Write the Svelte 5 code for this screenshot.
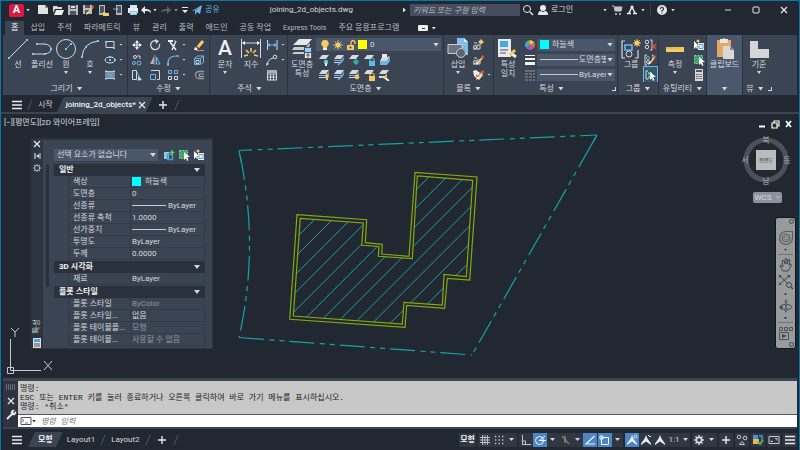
<script>
  const W = '#d6d9de';
  const B = '#6cb6ea';
  const Y = '#f6cb62';

  const line = (d, color = W, width = 1) =>
    `<path d="${d}" fill="none" stroke="${color}" stroke-width="${width}"/>`;
  const fill = (d, color = W) => `<path d="${d}" fill="${color}"/>`;
  const ring = (x, y, r, color = W, width = 1) =>
    `<circle cx="${x}" cy="${y}" r="${r}" fill="none" stroke="${color}" stroke-width="${width}"/>`;
  const disc = (x, y, r, color = W) => `<circle cx="${x}" cy="${y}" r="${r}" fill="${color}"/>`;
  const dots = (...pts) =>
    pts.map(([x, y]) => `<rect x="${x - 1}" y="${y - 1}" width="2" height="2" fill="#7cc8f5"/>`).join('');

  const sheet = fill('M4 1h7L8 5H1z');
  const stack = sheet + fill('M1 6h7l3-4v1L8 7H1z', B) + fill('M1 8h7l3-4v1L8 9H1z');
  const bulb = fill('M9 5a2.3 2.3 0 0 1 1 4v2H8V9a2.3 2.3 0 0 1 1-4z', Y);
  const sun = disc(9, 8, 2, Y) + line('M9 5v6M6 8h6M7 6l4 4M11 6l-4 4', Y, 0.6);
  const lock = (c) => fill('M6 7h6v5H6z', c) + line('M7 7V5q2-2 4 0v2', c);
  const pencil = line('M6 9l4-5', Y, 1.8) + fill('M4 11l1-3 2 1z', '#fff') + fill('M9 3l2-2 1 2-1 2z', '#e05a50');
  const cursor = fill('M6 3v8l2-2 1 3 1.5-1L9 8h3z', '#fff');
  const man = fill('M6 1l1.400 3.500L11 9.500V11L6 7.500 1 11V9.500L4.600 4.500z', '#e8eaee');

  const icons = {
    // title bar
    doc: fill('M1 1h7l3 3v6H1z', '#e3e3e3') + fill('M8 1l3 3H8z', '#8b919b'),
    open: fill('M1 2h4l1 1h4v2H3L1 9z') + fill('M4 6h8l-2 5H2z', '#eee'),
    save: fill('M1 1h10v10H1z', '#b9bcc1') + fill('M3 1h6v4H3zM3 7h6v4H3z', '#4d545f') + fill('M4 2h4v2H4z', '#ddd'),
    saveAs: fill('M1 1h9v9H1z', '#b9bcc1') + fill('M3 1h5v3H3zM3 6h4v4H3z', '#4d545f') + pencil,
    toWeb: fill('M2 1h6v10H2z', '#b4b8bf') + fill('M3 2h4v7H3z', '#4d545f') + fill('M6 8h2l1 1h3v3H6z', Y),
    fromWeb: fill('M4 1h6v10H4z', '#b4b8bf') + fill('M5 2h4v7H5z', '#4d545f') + line('M1 5h5M4 3l2 2-2 2', B),
    print: fill('M3 1h7v4H3z', '#cfeaff') + fill('M1 4h10v5H1z', '#ededed') + fill('M3 7h7v4H3z', '#8cc8f0') + line('M4 9h5', '#fff'),
    undo: fill('M1 6l4-4v3c4 0 6 1 6 4-2-2-3-2-6-2v3z', '#e8eaee'),
    redo: fill('M11 6L7 2v3C3 5 1 6 1 9c2-2 3-2 6-2v3z', '#59616e'),
    custom: fill('M3 3h6v1H3zM3 6h6L6 9z', '#e8eaee'),
    send: fill('M1 7L11 1 9 10 6 8 4 11V7l4-4-5 4z', B),
    search: ring(5, 5, 3.500, '#e8eaee') + line('M8 8l3 3', '#e8eaee', 1.400),
    user: disc(6, 4, 3, '#e8eaee') + fill('M1 11q0-4 3-4l2 1 2-1q3 0 3 4z', '#e8eaee'),
    cart: line('M1 2h2l1 5h6l1-4H4', '#ccc') + fill('M4 3h7l-1 4H4z', '#bfc3ca') + disc(5, 10, 1, '#ccc') + disc(9, 10, 1, '#ccc'),
    autodesk: line('M3 9L6 3l3 6M1 9.500h4M7 9.500h4', '#e8eaee', 1.500) + disc(6, 3, 1.500, '#e8eaee'),
    help: disc(6, 6, 5, '#e6e6e6') + line('M4.500 5q0-2 1.500-2t1.500 2q0 1-1.500 1.500v1M6 8.500v1', '#2a3039', 1.200),
    min: line('M3 6h6', '#d6d9de'),
    max: '<rect x="3" y="3" width="6" height="6" rx="1" fill="none" stroke="#e8eaee"/>',
    close: line('M3 3l6 6M9 3l-6 6', '#e8eaee', 1.200),
    panel: '<rect x="1" y="3" width="10" height="6" rx="1" fill="#eee"/>' + fill('M5 6h3v1H5z', '#333'),
    burger: line('M1 2.500h10M1 6h10M1 9.500h10', '#e8eaee', 1.500),
    plus: line('M6 2v8M2 6h8', '#e8eaee', 1.400),
    slash: line('M4 11L8 1', '#4d5564'),

    // draw
    line: line('M2 20L20 2') + dots([2, 20], [20, 2]),
    polyline: line('M2 16h12M6 6h8q6 1 6 5t-6 5') + dots([2, 16], [14, 16], [6, 6], [20, 11]),
    circle: ring(11, 11, 9.500) + line('M11 11l4-4', B) + dots([11, 11], [16, 6]),
    arc: line('M3 19Q4 5 19 3') + dots([3, 19], [7, 9], [19, 3]),
    rect: line('M2 2.500h8v6H2z') + dots([2, 3], [10, 9]),
    ellipse: '<ellipse cx="6" cy="6" rx="5" ry="3" fill="none" stroke="#d6d9de"/>' + dots([6, 6], [11, 6], [6, 3]),
    hatch: fill('M3 3h6v6H3z', '#6b9cc4') + line('M2 1v10M10 1v10M1 2.500h10M1 9.500h10', '#c0c5cc'),

    // modify
    move: line('M6 3v6M3 6h6', '#f2f2f2', 1.200) + fill('M6 1l2 3H4zM6 11l2-3H4zM1 6l3-2v4zM11 6L8 4v4z', '#f2f2f2'),
    rotate: line('M8 2A4.500 4.500 0 1 0 10.500 5', W, 1.300) + fill('M6 0l4 2-3 3z'),
    trim: line('M3 3l6 8M9 2L5 11', '#eee', 1.500) + fill('M1 1h5v2H1z', '#eee') + line('M8 1v4', B),
    erase: line('M5 8l5-6', Y, 3) + fill('M2 8l3 2-2 1H1z', '#fff') + fill('M4 7l2 2-1 1-2-2z', '#e05a50') + line('M3 11.500h8', '#b88'),
    copy: ring(4, 3, 1.500) + ring(8, 9, 2, B) + ring(3, 9, 1.500, B) + line('M6 2h3v3'),
    mirror: fill('M5 2v8H1z', '#aab0b9') + line('M7.500 3v7H11z', B) + line('M6 1v10', '#eee', 0.5),
    fillet: line('M1 11V9Q1 2 9 2', B, 1.200) + line('M9 2h3M1 9v3'),
    box: line('M1.500 4.500h6v6h-6zM2 4l2-2h7L8 4M10.500 2v6l-2 2', B) + line('M3 6.500h3v3H3z'),
    stretch: line('M1.500 1.500h4v9h-4z') + line('M6 3l4 8H6', B) + fill('M7 7l4 4H7z'),
    scale: line('M2 1.500h8.500v9H8') + line('M1.500 5.500h5v5h-5z', B),
    array: line('M1.500 1.500h3v3h-3zM7.500 1.500h3v3h-3z', B) + line('M1.500 7.500h3v3h-3zM7.500 7.500h3v3h-3z'),
    offset: line('M11 2.500H6a3.500 3.500 0 0 0 0 7h5', '#b58f8a', 1.300) + line('M11 5H7q-2 1 0 2.500h4', B, 1.200),

    // annotate
    text: '<text x="11" y="17" text-anchor="middle" font-size="21" font-weight="500" fill="#f0f1f3">A</text>',
    dimension: line('M1.500 1v19M20.500 1v19') + line('M3 5h16') + fill('M2 5l3-2v4zM20 5l-3-2v4z', '#fff') +
      line('M11 10v4M6 12l3 3M16 12l-3 3M4 18l4-1M18 18l-4-1', Y, 1.500),
    dimSmall: line('M1.500 1v10M11 1v10') + line('M2 6h8', B) + fill('M1 6l3-2v4zM11 6L8 4v4z', B),
    leader: line('M1 11Q2 5 7 4') + ring(9, 3, 1.800) + fill('M0 12l1-4 2 2z'),
    table: line('M1.500 2h9v9h-9zM1 5h10M1 8h10M4.500 5v6M7.500 5v6') + fill('M1 1h10v3H1z', '#a9afb8'),

    // layers
    layers: fill('M8 1h13l-5 6H2z', '#e6e6e6') + fill('M3 9h12l4-4v2l-3 5H1zM3 14h11l3-3v2l-1 3H1z', '#c9ccd1') +
      fill('M13 9h8v12h-8z', '#4b5260') + fill('M14 10h6v4h-6z', '#8ed0fa') + fill('M14 15h6v5h-6z', '#e6e6e6') + line('M15 17h4M17 15v5', '#444', 0.800),
    layerBulb: sheet + disc(8, 8, 2.200, '#5fd0d8') + fill('M7 9h2v3H7z', '#d8f4f4'),
    layerStack: stack + line('M5 11l5-5', B, 1.500),
    layerFreeze: sheet + disc(8, 8, 2.400, '#36aaa6') + line('M8 5v6M5 8h6', '#36aaa6'),
    layerLock: sheet + lock('#58c0e2'),
    layerMatch: fill('M2 7h7l3-4v4l-3 4H2z', B) + fill('M4 3h5l3-1-3 5H2z') + fill('M4 0h5v4H4z', '#e6e6e6'),
    layerOn: stack + bulb,
    layerPencil: stack + line('M5 11l5-5', B, 1.500),
    layerThaw: stack + sun,
    layerUnlock: sheet + lock(Y),
    layerCopy: sheet + fill('M1 7h6l2-2v2L7 9H1z') + line('M6 8l5 4', '#eee', 2) + fill('M5 9l3-3 1 2-2 2z', Y),
    bulb: fill('M6 1a3.500 3.500 0 0 1 2 6.500V9H4V7.500A3.500 3.500 0 0 1 6 1z', Y) + fill('M4 9h4v2H4z', '#eee'),
    sun: disc(6, 6, 2.600, Y) + line('M6 1v10M1 6h10M2.500 2.500l7 7M9.500 2.500l-7 7', Y, 0.800),
    unlock: fill('M2 6h7v5H2z', Y) + line('M6 6V3q2-3 4 0v2', Y, 1.300) + disc(5.500, 8.500, 1, '#333'),

    // block
    insert: fill('M10 0h7l4 4v13H10z', '#7fc0ea') + fill('M17 0l4 4h-4z', '#d5ecfb') + fill('M1 6h14v10H1z', '#6b7380') +
      line('M1 6.500h14v9H1z', '#c9ccd1') + disc(14, 15, 5, '#5d6570') + ring(14, 15, 4.500, '#c9ccd1'),
    blockNew: line('M2 4h3M1 10h7V6H5v4') + ring(3, 8, 1.500) + disc(9, 3, 2, Y) + line('M9 0v6M6 3h6', Y, 0.800),
    blockEdit: line('M2 4h3M1 10h7V6H5v4') + ring(3, 8, 1.500) + pencil,
    attr: fill('M1 2l3-1 7 5-4 5-5-4z', '#eee') + line('M4 6l2 2 4-6', '#c8443c', 1.300) + pencil,

    // properties
    match: fill('M1 1h13v18H1z', '#e9e9e9') + fill('M3 3h8v6H3z', '#4aa6e0') + line('M3 12h8M3 15h6', '#555', 1.200) +
      line('M11 13l8 6', '#eee', 3) + line('M13 17l5-5', Y, 3),
    wheel: '<path d="M6 6V1a5 5 0 0 1 4.300 2.500z" fill="#f3c844"/>' + fill('M6 6l4.300-2.500a5 5 0 0 1 0 5z', '#e5763c') + fill('M6 6l4.300 2.500A5 5 0 0 1 6 11z', '#d34c9b') +
      fill('M6 6v5a5 5 0 0 1-4.300-2.500z', '#7a62d8') + fill('M6 6L1.700 8.500a5 5 0 0 1 0-5z', '#42a8de') + fill('M6 6L1.700 3.500A5 5 0 0 1 6 1z', '#57bd63'),
    weights: fill('M1 1h10v1H1zM1 4h10v2H1zM1 8h10v3H1z', '#f2f2f2'),
    types: line('M1 2h10', '#8f96a1') + '<path d="M1 5h10M1 8h10M1 11h10" stroke="#8f96a1" stroke-dasharray="3 1"/>',

    // groups and utilities
    group: line('M5 3H2v17h3M15 20h3v-8M18 12v8', W, 1.200) + line('M5 7h7v5H5z', B, 1.600) + ring(9, 16, 3) +
      disc(17, 5, 2.600, Y) + line('M17 1v8M13 5h8M14 2l6 6M20 2l-6 6', Y, 0.800),
    ungroup: ring(3, 3, 1.800) + ring(3, 8, 1.800) + line('M6 1h2v10H6') + line('M8 5l4 5M12 5l-4 5', '#e04848', 1.300),
    groupEdit: line('M3 1H1v10h2M8 1h1v4') + ring(4, 4, 1.500, B) + ring(4, 8, 1.500) + pencil,
    groupSel: line('M4 2H2v8h2') + fill('M4 3h4v3H4zM4 7h3v3H4z', '#4cbf7f') + cursor,
    measure: fill('M2 9h18v5H2z', Y) + line('M4 9v2M7 9v2M10 9v2M13 9v2M16 9v2', '#b08c38', 0.800),
    quickSel: fill('M5 4h6v7H5z', '#e8eef4') + line('M6 5.500h4v4H6z', '#5aa0d0') + fill('M1 2v8l2-2 1 2 1-1-1-2h2z', '#fff') + disc(5, 2, 1.500, Y),
    selAll: fill('M2 2h7v7H2z', '#39a868') + '<path d="M1.500 1.500h8v8h-8z" fill="none" stroke="#8ad7a6" stroke-dasharray="2 1"/>' + cursor,
    calc: fill('M2 0h8v12H2z', '#d9d9d9') + fill('M3 1h6v2H3z', '#555') + line('M3 5.500h6M3 7.500h6M3 9.500h6', '#666') + line('M5 4v7M7 4v7', '#d9d9d9', 0.600),
    clip: fill('M3 2h14v17H3z', '#e3a866') + fill('M6 1h3q1-2 2 0h3v4H6z', '#e6e6e6') + fill('M9 8h7l4 4v9H9z', '#d8d8d8') + fill('M16 8l4 4h-4z', '#8c8c8c'),
    base: fill('M2 3h8v8h11v9H2z', '#d5d6d8'),

    // palette
    pickAdd: fill('M1 3h5v7H1z', '#8ecbf2') + line('M4.500 5.500h5v5h-5z', '#4a9bd0', 1.500) + line('M9 1v5M6.500 3.500h5', '#57d36a', 1.400),
    pin: line('M4 3v6', W, 1.200) + line('M9 3v6', W) + fill('M5 6l3-2v4z'),
    gear: ring(6, 6, 2.600, W, 1.600) + line('M6 1v2M6 9v2M1 6h2M9 6h2M2.500 2.500l1.400 1.400M8.100 8.100l1.400 1.400M9.500 2.500L8.100 3.900M3.900 8.100L2.500 9.500', W, 1.500),
    cog: ring(6, 6, 2.500, '#b9bdc5') + line('M6 2v1.500M6 8.500V10M2 6h1.500M8.500 6H10M3 3l1 1M8 8l1 1M9 3L8 4M4 8L3 9', '#b9bdc5'),
    sheetProps: fill('M2 1h8v10H2z', '#ddd') + fill('M3 2h6v3H3z', '#4aa6e0') + line('M3 7h6M3 9h6', '#555'),

    // command line and status bar
    wrench: line('M2 10l5-5', '#e8eaee', 1.800) + fill('M6 5a3 3 0 0 1 4-4L8 3l1 1 2-2a3 3 0 0 1-4 4z', '#e8eaee'),
    grip: '<path d="M1 4h10M1 6h10M1 8h10" stroke="#9da3ad" stroke-dasharray="1 1"/>',
    prompt: line('M1 2.500h10v7H1z', '#555') + line('M2 4l2 1.500L2 7M5 8h3', '#555', 0.800),
    grid: line('M3.500 1v10M6 1v10M8.500 1v10M1 3.500h10M1 6h10M1 8.500h10', '#c3c7ce', 0.900),
    snap: '<path d="M2 2.500h9M2 6h9M2 9.500h9" stroke="#c3c7ce" stroke-width="1.300" stroke-dasharray="1.300 2.200"/>',
    ortho: line('M2.500 1v9.500H11M2.500 7h3v3', '#c3c7ce'),
    polar: ring(5.500, 6.500, 4, '#eef4fa') + line('M5 7l6-5M5.500 6.500H12', '#eef4fa'),
    iso: line('M3 2l7 8', '#b0606c', 1.200) + line('M6 2v7', '#58b868', 1.200),
    track: line('M10.500 2L2 10h9', '#eef4fa', 1.200),
    osnap: line('M2.500 3.500h7v7h-7z', '#eef4fa') + line('M1 2h3v3H1z', '#eef4fa'),
    man: man,
    manScale: man + ring(9.500, 2.500, 1.500, '#e8eaee', 0.900),
    manAuto: man + line('M8 1l2 2 1-1', '#e8eaee'),
    shapes: ring(3, 3, 1.800, '#c3c7ce') + ring(9, 4, 1.800, '#c3c7ce') + line('M6 7.500l2.500 3h-5z', '#c3c7ce'),
    trusted: fill('M1 1h5v4H1z', '#4a8edb') + fill('M1 5h6v5H1z', '#e8b84c') + line('M7 2h3v4', '#4a8edb', 1.500) + line('M6 8l2 2 3-4', '#4fc05c', 1.800),
    screen: line('M1 2.500h10v7H1z', '#c3c7ce') + line('M7 4.500h2v2M5 7.500H3v-1', '#c3c7ce'),

    // navigation bar
    nav: '<path d="M1.500 8a6.500 6.500 0 0 1 6.500-6.500h6.500V8a6.500 6.500 0 0 1-13 0z" fill="none" stroke="#555d68" stroke-width="1.200"/>' +
      ring(8, 8, 4, '#555d68') + '<rect x="6" y="6" width="4" height="4" rx="1.500" fill="none" stroke="#555d68" stroke-width="0.700"/>',
    hand: line('M5 14L2 9q0-2 2 0l1 1-1-6q1-2 2 0l1 3V2q1-1 2 0v5l1-4q1-1 2 0l-1 5 1-1q2 0 1 2l-3 5z', '#3e4650'),
    zoomNav: line('M2 2l8 8M11 2L3 9', '#3e4650') + fill('M1 1h3L1 4zM12 1H9l3 3zM1 11V8l3 3z', '#3e4650') + ring(11, 11, 2.500, '#3e4650') + line('M13 13l2 2', '#3e4650', 1.200),
    orbit: '<ellipse cx="8" cy="9" rx="6" ry="2.500" fill="none" stroke="#3e4650"/>' + fill('M8 1l2 3H9v8h1l-2 3-2-3h1V4H6z', '#59697a') + fill('M1 9l3 3 1-4z', '#3e4650'),
    motion: line('M1.500 2.500h3v3h-3zM6.500 2.500h3v3h-3zM11.500 2.500h3v3h-3zM1.500 7.500h9v7h-9z', '#4b535e') + fill('M4 9l5 2-5 2z', '#3e4650')
  };

  const quick = [
    ['doc', '새로 만들기'], ['open', '열기'], ['save', '저장'], ['saveAs', '다른 이름으로 저장'],
    ['toWeb', '웹에서 열기'], ['fromWeb', '웹에 저장'], ['print', '플롯']
  ];

  const menus = ['홈', '삽입', '주석', '파라메트릭', '뷰', '관리', '출력', '애드인', '공동 작업', 'Express Tools', '주요 응용프로그램'];

  const drawTools = [['line', '선'], ['polyline', '폴리선'], ['circle', '원', true], ['arc', '호', true]];
  const modifyTools = [
    ['move'], ['rotate'], ['trim', true], ['erase'],
    ['copy'], ['mirror'], ['fillet', true], ['box'],
    ['stretch'], ['scale'], ['array', true], ['offset']
  ];
  const layerTools = [
    'layerBulb', 'layerStack', 'layerFreeze', 'layerLock', 'layerMatch',
    'layerOn', 'layerPencil', 'layerThaw', 'layerUnlock', 'layerCopy'
  ];

  const sections = [
    {
      name: '일반',
      rows: [
        { label: '색상', value: '하늘색', swatch: true },
        { label: '도면층', value: '0' },
        { label: '선종류', value: 'ByLayer', rule: true },
        { label: '선종류 축척', value: '1.0000' },
        { label: '선가중치', value: 'ByLayer', rule: true },
        { label: '투명도', value: 'ByLayer' },
        { label: '두께', value: '0.0000' }
      ]
    },
    { name: '3D 시각화', rows: [{ label: '재료', value: 'ByLayer' }] },
    {
      name: '플롯 스타일',
      rows: [
        { label: '플롯 스타일', value: 'ByColor', dim: true },
        { label: '플롯 스타일...', value: '없음' },
        { label: '플롯 테이블플...', value: '모형', dim: true },
        { label: '플롯 테이블...', value: '사용할 수 없음', dim: true }
      ]
    }
  ];

  // 45 degree hatch, one value of x + y per line
  const hatch = Array.from({ length: 12 }, (_, k) => 534 + k * 17.95);

  let menu = $state('홈');
  let command = $state('');
  let query = $state('');
</script>

{#snippet icon(name, size = 12)}
  <svg class="icon" width={size} height={size} viewBox="0 0 {size} {size}" aria-hidden="true">{@html icons[name]}</svg>
{/snippet}

{#snippet big(name, label, arrow = false)}
  <button class="big">
    {@render icon(name, 22)}
    <span class="caption">{label}</span>
    {#if arrow}<i class="arrow"></i>{/if}
  </button>
{/snippet}

{#snippet tool(name, arrow = false)}
  <button class="tool" aria-label={name}>{@render icon(name)}{#if arrow}<i class="arrow"></i>{/if}</button>
{/snippet}

{#snippet title(text, launcher = false)}
  <footer class="panel-title">
    <span>{text}</span><i class="arrow wide"></i>
    {#if launcher}<i class="launcher"></i>{/if}
  </footer>
{/snippet}

<div class="app">
  <header class="titlebar">
    <button class="logo" aria-label="응용프로그램 메뉴">A</button>
    <i class="arrow"></i>
    <div class="quick">
      {#each quick as [name, label]}
        <button class="slot" aria-label={label}>{@render icon(name)}</button>
      {/each}
      <button class="slot narrow" aria-label="명령 취소">{@render icon('undo')}</button><i class="arrow"></i>
      <button class="slot" aria-label="명령 복구">{@render icon('redo')}</button><i class="arrow dim"></i>
      <button class="slot narrow" aria-label="사용자화">{@render icon('custom')}</button>
    </div>
    <button class="share">{@render icon('send')}공유</button>
    <h1>joining_2d_objects.dwg</h1>
    <i class="play"></i>
    <input class="search" type="search" placeholder="키워드 또는 구절 입력" aria-label="검색" bind:value={query} />
    <button class="slot wide" aria-label="찾기">{@render icon('search')}</button>
    <button class="login">{@render icon('user')}로그인</button>
    <i class="arrow"></i>
    <button class="slot" aria-label="장바구니">{@render icon('cart')}</button>
    <button class="slot" aria-label="Autodesk">{@render icon('autodesk')}</button>
    <i class="arrow"></i>
    <span class="vr"></span>
    <button class="slot" aria-label="도움말">{@render icon('help')}</button>
    <i class="arrow"></i>
    <div class="window-buttons">
      <button aria-label="최소화">{@render icon('min')}</button>
      <button aria-label="최대화">{@render icon('max')}</button>
      <button aria-label="닫기">{@render icon('close')}</button>
    </div>
  </header>

  <nav class="menubar">
    {#each menus as name}
      <button class:active={menu === name} class:latin={/^[A-Z]/.test(name)} onclick={() => (menu = name)}>{name}</button>
    {/each}
    <button class="view-toggle" aria-label="리본 보기">{@render icon('panel')}<i class="arrow"></i></button>
  </nav>

  <div class="ribbon">
    <section class="panel draw">
      <div class="tools">
        {#each drawTools as [name, label, arrow]}
          {@render big(name, label, arrow)}
        {/each}
        <div class="column">
          {@render tool('rect', true)}
          {@render tool('ellipse', true)}
          {@render tool('hatch', true)}
        </div>
      </div>
      {@render title('그리기')}
    </section>

    <section class="panel modify">
      <div class="tools modify-grid">
        {#each modifyTools as [name, arrow]}
          {@render tool(name, arrow)}
        {/each}
      </div>
      {@render title('수정')}
    </section>

    <section class="panel annotate">
      <div class="tools">
        {@render big('text', '문자', true)}
        {@render big('dimension', '지수')}
        <div class="column">
          {@render tool('dimSmall', true)}
          {@render tool('leader', true)}
          {@render tool('table')}
        </div>
      </div>
      {@render title('주석')}
    </section>

    <section class="panel layer">
      <div class="tools">
        {@render big('layers', '도면층 특성')}
        <div class="layer-side">
          <label class="combo">
            {@render icon('bulb')}{@render icon('sun')}{@render icon('unlock')}
            <span class="swatch yellow"></span>
            <select aria-label="도면층"><option>0</option></select>
            <i class="arrow wide"></i>
          </label>
          <div class="layer-grid">
            {#each layerTools as name}
              {@render tool(name)}
            {/each}
          </div>
        </div>
      </div>
      {@render title('도면층')}
    </section>

    <section class="panel block">
      <div class="tools">
        {@render big('insert', '삽입', true)}
        <div class="column">
          {@render tool('blockNew')}
          {@render tool('blockEdit')}
          {@render tool('attr', true)}
        </div>
      </div>
      {@render title('블록')}
    </section>

    <section class="panel props">
      <div class="tools">
        {@render big('match', '특성 일치')}
        <div class="column">
          {@render tool('wheel')}
          {@render tool('weights')}
          {@render tool('types')}
        </div>
        <div class="combos">
          <label class="combo">
            <span class="swatch cyan"></span>
            <select aria-label="색상"><option>하늘색</option></select>
            <i class="arrow wide"></i>
          </label>
          <label class="combo tight">
            <span class="rule"></span>
            <select aria-label="선가중치"><option>도면층별</option></select>
            <i class="arrow wide"></i>
          </label>
          <label class="combo tight">
            <span class="rule"></span>
            <select aria-label="선종류"><option>ByLayer</option></select>
            <i class="arrow wide"></i>
          </label>
        </div>
      </div>
      {@render title('특성', true)}
    </section>

    <section class="panel group">
      <div class="tools">
        {@render big('group', '그룹')}
        <div class="column selected-last">
          {@render tool('ungroup')}
          {@render tool('groupEdit')}
          {@render tool('groupSel')}
        </div>
      </div>
      {@render title('그룹')}
    </section>

    <section class="panel utility">
      <div class="tools">
        {@render big('measure', '측정', true)}
        <div class="column">
          {@render tool('quickSel')}
          {@render tool('selAll')}
          {@render tool('calc')}
        </div>
      </div>
      {@render title('유틸리티')}
    </section>

    <section class="panel clipboard">
      <div class="tools">{@render big('clip', '클립보드')}</div>
      {@render title('')}
    </section>

    <section class="panel base">
      <div class="tools">{@render big('base', '기준', true)}</div>
      {@render title('뷰', true)}
    </section>
  </div>

  <nav class="sheets files">
    <button class="menu" aria-label="파일 메뉴">{@render icon('burger')}</button>
    {@render icon('slash')}
    <button class="sheet">시작</button>
    <button class="sheet active">joining_2d_objects*<span class="x">{@render icon('close')}</span></button>
    <button class="add" aria-label="새 도면">{@render icon('plus')}</button>
    {@render icon('slash')}
  </nav>

  <main class="canvas">
    <svg class="drawing" viewBox="1 114 798 264" aria-label="도면">
      <defs>
        <clipPath id="inside">
          <path d="M300 218L363 223L362 245L379 246L378 256L412 259L417 176L473 180L466 277L444 274L442 305L404 302L402 324L293 316Z" />
        </clipPath>
      </defs>
      <g class="site">
        <path d="M239 150.500L597 135" stroke-dashoffset="12" />
        <path d="M597 135L472 355" stroke-dashoffset="-12" />
        <path d="M239 337.500L472 355" />
        <path d="M239 150.500Q260 245 239 337.500" stroke-dashoffset="-5" />
        <path class="solid" d="M597 135L591 145.600M239 150.500L241 161" />
      </g>
      <g class="hatch" clip-path="url(#inside)">
        {#each hatch as sum}
          <path d="M{sum - 330} 330L{sum - 170} 170" />
        {/each}
      </g>
      <g class="wall">
        <path d="M297 214.700L366.700 219.700L365.300 242.700L382.300 244.300L381.700 254L409 256.300L415 172.500L477 177L469.700 280L447.300 278.300L444.700 308.300L406.700 305.300L405 327.300L289.700 319.300Z" />
        <path d="M300.300 218.300L363.300 223L361.700 245.300L379 246.500L378.300 256.300L412.300 258.700L417.300 176L472.700 180.300L466.300 276.700L444 274.500L442.300 305L404 302.300L402.300 324L293.300 316Z" />
      </g>
      <path class="ucs" d="M7.500 367.500h6v6h-6zM10.500 370.500V339M10.500 370.500H41M11 328l4 4 4-4M15 332v5M44 361l8 9M52 361l-8 9" />
    </svg>

    <p class="view-label">[−][평면도][2D 와이어프레임]</p>

    <aside class="palette">
      <div class="spine">
        <button aria-label="닫기">{@render icon('close')}</button>
        <button aria-label="자동 숨기기">{@render icon('pin')}</button>
        <button aria-label="설정">{@render icon('cog')}</button>
        <span class="name">특성</span>
        {@render icon('sheetProps')}
      </div>
      <div class="body">
        <div class="picker">
          <label class="combo">
            <select aria-label="선택"><option>선택 요소가 없습니다</option></select>
            <i class="arrow wide"></i>
          </label>
          <button aria-label="객체 추가">{@render icon('pickAdd')}</button>
          <button aria-label="객체 선택">{@render icon('selAll')}</button>
          <button aria-label="신속 선택">{@render icon('quickSel')}</button>
        </div>
        <div class="lists">
          <span class="scroll"></span>
          <div class="sections">
            {#each sections as section}
              <section>
                <button class="head">{section.name}<i class="arrow wide"></i></button>
                <table>
                  <tbody>
                    {#each section.rows as row}
                      <tr class:dim={row.dim}>
                        <th scope="row">{row.label}</th>
                        <td>
                          {#if row.swatch}<span class="swatch cyan"></span>{/if}
                          {#if row.rule}<span class="rule"></span>{/if}
                          {row.value}
                        </td>
                      </tr>
                    {/each}
                  </tbody>
                </table>
              </section>
            {/each}
          </div>
        </div>
      </div>
    </aside>

    <div class="compass">
      <div class="child-buttons">
        <button aria-label="최소화"><svg class="icon" width="12" height="12" viewBox="0 0 12 12"><path d="M3 8.500h6" stroke="#fff" stroke-width="2" /></svg></button>
        <button aria-label="복원"><svg class="icon" width="12" height="12" viewBox="0 0 12 12"><path d="M3 5h5v5H3zM5 5V3h5v5H8" fill="none" stroke="#fff" stroke-width="1.200" /></svg></button>
        <button aria-label="닫기"><svg class="icon" width="12" height="12" viewBox="0 0 12 12"><path d="M4 3l5 6M9 3l-5 6" stroke="#fff" stroke-width="1.800" /></svg></button>
      </div>
      <svg class="cube" width="50" height="50" viewBox="0 0 50 50">
        <circle cx="25" cy="25" r="20" fill="none" stroke="#4b5059" stroke-width="5" />
        <rect x="15" y="15" width="20" height="20" fill="#b9bbbd" />
        <g font-size="8" text-anchor="middle" fill="#a9adb3">
          <text x="25" y="8">북</text>
          <text x="25" y="49">남</text>
          <text x="4" y="28">서</text>
          <text x="46" y="28">동</text>
        </g>
        <text x="25" y="27" font-size="5" text-anchor="middle" fill="#3c4148">평면도</text>
      </svg>
      <button class="wcs">WCS<i></i></button>
    </div>

    <div class="navbar">
      <i class="knob"></i>
      <button aria-label="휠">{@render icon('nav', 16)}</button>
      <i class="arrow"></i>
      <hr />
      <button aria-label="초점이동">{@render icon('hand', 16)}</button>
      <button aria-label="줌">{@render icon('zoomNav', 16)}</button>
      <i class="arrow"></i>
      <button aria-label="궤도">{@render icon('orbit', 16)}</button>
      <i class="arrow"></i>
      <hr />
      <button aria-label="쇼모션">{@render icon('motion', 16)}</button>
      <i class="knob last"></i>
    </div>
  </main>

  <section class="console">
    <div class="grips">
      {@render icon('grip')}
      <button aria-label="닫기">{@render icon('close')}</button>
      <button aria-label="사용자화">{@render icon('wrench')}</button>
    </div>
    <div class="output">
      <div class="history">
        <p>명령:</p>
        <p>ESC 또는 ENTER 키를 눌러 종료하거나 오른쪽 클릭하여 바로 가기 메뉴를 표시하십시오.</p>
        <p>명령: *취소*</p>
      </div>
      <label class="entry">
        {@render icon('prompt')}<i class="arrow"></i>
        <input placeholder="명령 입력" aria-label="명령 입력" bind:value={command} />
      </label>
    </div>
  </section>

  <footer class="statusbar">
    <nav class="sheets">
      <button class="menu" aria-label="배치 메뉴">{@render icon('burger')}</button>
      <button class="sheet active">모형</button>
      <button class="sheet">Layout1</button>
      {@render icon('slash')}
      <button class="sheet">Layout2</button>
      {@render icon('slash')}
      <button class="add" aria-label="새 배치">{@render icon('plus')}</button>
      {@render icon('slash')}
    </nav>
    <div class="toggles">
      <span class="set"><button class="word">모형</button></span>
      <span class="set">
        <button aria-label="그리드">{@render icon('grid')}</button>
        <button aria-label="스냅">{@render icon('snap')}</button><i class="arrow"></i>
      </span>
      <span class="set">
        <button aria-label="직교">{@render icon('ortho')}</button>
        <button class="on" aria-label="극좌표">{@render icon('polar')}</button><i class="arrow"></i>
        <button aria-label="등각">{@render icon('iso')}</button><i class="arrow"></i>
        <button class="on" aria-label="추적">{@render icon('track')}</button>
        <button class="on" aria-label="객체 스냅">{@render icon('osnap')}</button><i class="arrow"></i>
      </span>
      <span class="set">
        <button class="on" aria-label="주석 가시성">{@render icon('manScale')}</button>
        <button aria-label="자동 축척">{@render icon('manAuto')}</button>
        <button aria-label="주석 축척">{@render icon('man')}</button>
        <button class="ratio">1:1</button><i class="arrow"></i>
      </span>
      <span class="set"><button aria-label="작업공간">{@render icon('gear')}</button><i class="arrow"></i></span>
      <span class="set"><button aria-label="주석 모니터">{@render icon('plus')}</button></span>
      <span class="set"><button aria-label="객체 분리">{@render icon('shapes')}</button></span>
      <span class="set"><button aria-label="신뢰">{@render icon('trusted')}</button></span>
      <span class="set"><button aria-label="화면 정리">{@render icon('screen')}</button></span>
      <span class="set"><button aria-label="사용자화">{@render icon('burger')}</button></span>
    </div>
  </footer>
</div>

<style>
  :global(body) {
    margin: 0;
    background: #222831;
  }
  .app {
    box-sizing: border-box;
    min-height: 100vh;
    display: flex;
    flex-direction: column;
    border: 1px solid #0d76a6;
    background: #222831;
    color: #d5d8dd;
    font-family: Roboto, 'Noto Sans CJK KR', sans-serif;
    font-size: 8px;
    line-height: 10px;
  }
  button, input, select {
    margin: 0;
    padding: 0;
    border: 0;
    background: none;
    color: inherit;
    font: inherit;
  }
  button {
    display: flex;
    align-items: center;
    justify-content: center;
    white-space: nowrap;
  }
  input:focus-visible, select:focus-visible { outline: 1px solid #6cb6ea; }
  p { margin: 0; }
  .icon { display: block; flex: none; }
  .arrow {
    flex: none;
    width: 5px;
    height: 3px;
    background: #d5d8dd;
    clip-path: polygon(0 0, 100% 0, 50% 100%);
  }
  .arrow.wide { width: 6px; height: 4px; }
  .arrow.dim { opacity: 0.6; }
  .swatch {
    flex: none;
    display: inline-block;
    width: 9px;
    height: 9px;
  }
  .swatch.cyan { background: #00ffff; }
  .swatch.yellow { background: #ffff00; }

  /* title bar */
  .titlebar {
    height: 18px;
    display: flex;
    align-items: center;
    padding: 0 1px 0 8px;
  }
  .titlebar .arrow { width: 4px; margin: 0 2px; }
  .logo {
    width: 15px;
    height: 13px;
    border-radius: 2px;
    background: #dc1742;
    color: #fff;
    font-size: 11px;
    font-weight: 700;
  }
  .quick {
    display: flex;
    align-items: center;
    padding-left: 3px;
  }
  .quick .arrow { margin: 0 1px; }
  .slot { width: 15px; }
  .slot.wide { width: 17px; }
  .slot.narrow { width: 12px; }
  .share { gap: 2px; color: #6cb6ea; }
  h1 {
    flex: 1;
    margin: 0;
    text-align: center;
    font-size: 8px;
    font-weight: 400;
  }
  .play {
    width: 3px;
    height: 5px;
    margin-right: 4px;
    background: #e8eaee;
    clip-path: polygon(0 0, 100% 50%, 0 100%);
  }
  .search {
    box-sizing: border-box;
    width: 110px;
    height: 12px;
    padding: 0 3px;
    background: #454d5e;
    font-style: italic;
    appearance: none;
  }
  .search::placeholder { color: #b4b9c2; opacity: 1; }
  .login {
    gap: 2px;
    margin-right: 28px;
  }
  .vr {
    width: 1px;
    height: 12px;
    margin: 0 3px;
    background: #3b4453;
  }
  .window-buttons {
    display: flex;
    padding-left: 37px;
  }
  .window-buttons button { width: 28px; }

  /* menu tabs */
  .menubar {
    height: 16px;
    display: flex;
    align-items: flex-end;
    padding-left: 4px;
  }
  .menubar button {
    height: 14px;
    padding: 0 6px;
    color: #b9bdc5;
  }
  .menubar .latin { font-size: 7px; }
  .menubar .active {
    background: #3b4453;
    color: #f2f3f5;
  }
  .menubar .view-toggle { gap: 2px; padding: 0 12px; }

  /* ribbon */
  .ribbon {
    display: flex;
    margin: 0 2px;
    background: #3b4453;
  }
  .panel {
    box-sizing: border-box;
    height: 60px;
    display: flex;
    flex-direction: column;
    border-right: 1px solid #2c333f;
  }
  .draw { width: 125px; padding-left: 3px; }
  .modify { width: 82px; }
  .annotate { width: 78px; padding-left: 2px; }
  .layer { width: 156px; }
  .block { width: 50px; }
  .props { width: 124px; }
  .group { width: 41px; }
  .utility { width: 48px; }
  .clipboard { width: 36px; background: #4a586e; }
  .base { width: 32px; border-right: 0; }
  .tools {
    height: 45px;
    display: flex;
    padding-top: 2px;
  }
  .big {
    width: 26px;
    flex-direction: column;
    justify-content: flex-start;
    padding-top: 1px;
  }
  .draw .big { width: 24px; }
  .caption { line-height: 9px; }
  .layer .caption, .props .caption { width: 24px; white-space: normal; }
  .big .arrow { width: 4px; margin-top: 2px; }
  .layer .big, .block .big, .props .big { width: 28px; }
  .utility .big { width: 32px; }
  .clipboard .big { width: 35px; }
  .base .big { width: 32px; }
  .column {
    display: grid;
    grid-template-rows: repeat(3, 15px);
  }
  .tool {
    height: 15px;
    justify-content: flex-start;
    gap: 3px;
    padding-left: 2px;
  }
  .tool .arrow { width: 4px; height: 2px; }
  .modify-grid {
    display: grid;
    grid-template-columns: 18px 18px 26px 18px;
    grid-template-rows: repeat(3, 15px);
  }
  .modify-grid .tool { padding-left: 3px; }
  .layer-side { flex: 1; padding-right: 2px; }
  .layer-grid {
    display: grid;
    grid-template-columns: repeat(5, 15px);
    padding-top: 1px;
  }
  .combo {
    box-sizing: border-box;
    height: 12px;
    display: flex;
    align-items: center;
    gap: 3px;
    padding: 0 2px 0 3px;
    background: #4a576b;
  }
  .combo.tight { gap: 1px; }
  .layer .combo { height: 13px; margin-top: 1px; }
  .layer .combo .icon { margin-right: -2px; }
  .combo select {
    flex: 1;
    min-width: 0;
    height: 12px;
    appearance: none;
    line-height: 12px;
  }
  .combos {
    flex: 1;
    display: grid;
    grid-template-rows: repeat(3, 15px);
    align-items: center;
    padding-right: 2px;
  }
  .props .tool { width: 15px; }
  .combos .combo { min-width: 0; }
  .rule {
    flex: none;
    width: 38px;
    height: 1px;
    background: #c6cad1;
  }
  .block .tool, .group .tool { padding-left: 0; }
  .selected-last { width: 13px; }
  .selected-last .tool:last-child { outline: 1px solid #6cb6ea; background: #35566f; }
  .panel-title {
    height: 13px;
    display: flex;
    align-items: center;
    justify-content: center;
    gap: 4px;
    white-space: nowrap;
    background: #3b4453;
  }
  .clipboard .panel-title { background: none; }
  .clipboard .panel-title span { display: none; }
  .props .panel-title { padding-left: 44px; }
  .props .launcher { margin-left: 44px; }
  .launcher {
    width: 3px;
    height: 3px;
    border-right: 1px solid #d5d8dd;
    border-bottom: 1px solid #d5d8dd;
  }

  /* drawing and layout tabs */
  .sheets {
    display: flex;
    align-items: center;
  }
  .sheets > .icon { margin: 0 -2px; }
  .files {
    height: 15px;
    padding: 2px 0 0 10px;
    border-bottom: 2px solid #3b4453;
  }
  .sheet {
    height: 15px;
    padding: 0 4px;
  }
  .files .menu { margin-right: 3px; }
  .sheet.active {
    padding: 0 10px;
    background: #3b4453;
    color: #f2f3f5;
    font-weight: 700;
    clip-path: polygon(7px 0, 100% 0, calc(100% - 7px) 100%, 0 100%);
  }
  .files .sheet.active { padding: 0 5px 0 9px; font-weight: 500; }
  .add { padding: 0 4px; }

  /* model space */
  .canvas {
    position: relative;
    flex: 1;
    min-height: 264px;
  }
  .drawing {
    position: absolute;
    inset: 0;
    width: 100%;
    height: 100%;
  }
  .drawing path { fill: none; }
  .site path {
    stroke: #12a5a8;
    stroke-width: 1.2;
    stroke-dasharray: 25 5.500 5 5 5 5;
  }
  .site .solid { stroke-dasharray: none; }
  .hatch path { stroke: #14a5a9; }
  .wall path { stroke: #86a80c; stroke-width: 1.2; }
  .drawing .ucs { stroke: #c4c7cb; }
  .view-label {
    position: relative;
    padding: 4px 3px;
  }

  .palette {
    position: absolute;
    top: 24px;
    left: 30px;
    width: 182px;
    display: flex;
    background: #2d3440;
  }
  .spine {
    width: 14px;
    display: flex;
    flex-direction: column;
    align-items: center;
  }
  .spine button { height: 12px; }
  .spine .name {
    margin-top: auto;
    padding: 3px 0;
    writing-mode: vertical-rl;
    text-orientation: sideways;
    transform: rotate(180deg);
  }
  .palette .body {
    flex: 1;
    margin: 2px 1px 1px 0;
    padding: 9px 7px 2px 3px;
    background: #3b4453;
  }
  .picker {
    display: flex;
    align-items: center;
    gap: 3px;
    padding: 0 0 3px 8px;
  }
  .picker .combo { width: 104px; margin-right: 2px; }
  .lists { display: flex; gap: 5px; }
  .scroll {
    width: 3px;
    height: 123px;
    border-radius: 2px;
    background: #2b313c;
  }
  .sections { flex: 1; }
  .sections section + section { margin-top: 1px; }
  .head {
    width: 100%;
    height: 12px;
    justify-content: space-between;
    padding: 0 5px;
    background: #2b313c;
    color: #f2f3f5;
    font-weight: 700;
  }
  table {
    width: 137px;
    margin-left: auto;
    table-layout: fixed;
    border-spacing: 0;
    border-left: 1px solid #333b48;
  }
  th, td {
    height: 11px;
    padding: 0 2px;
    border-right: 1px solid #333b48;
    border-bottom: 1px solid #333b48;
    overflow: hidden;
    line-height: 11px;
    white-space: nowrap;
    text-align: left;
    font-weight: 400;
  }
  th { width: 57px; padding-left: 4px; padding-right: 0; }
  td { padding-left: 1px; }
  td .swatch { margin-right: 2px; vertical-align: top; margin-top: 1px; }
  td .rule { display: inline-block; width: 34px; vertical-align: middle; }
  .dim td { color: #8d949f; }

  .compass {
    position: absolute;
    top: 4px;
    right: 3px;
    display: flex;
    flex-direction: column;
    align-items: flex-end;
  }
  .child-buttons { display: flex; gap: 1px; padding-right: 2px; }
  .cube {
    margin: 5px 5px 0 0;
    overflow: visible;
  }
  .wcs {
    gap: 4px;
    width: 29px;
    height: 11px;
    margin: 7px 14px 0 0;
    border-radius: 2px;
    background: #8e919c;
    color: #d5d8de;
  }
  .wcs i { width: 5px; height: 4px; background: #a9acb5; clip-path: polygon(0 0, 100% 0, 50% 100%); }

  .navbar {
    position: absolute;
    top: 103px;
    right: 3px;
    width: 19px;
    height: 130px;
    display: flex;
    flex-direction: column;
    align-items: center;
    border: 1px solid #11151a;
    border-radius: 3px;
    background: #989a9c;
  }
  .navbar .arrow { width: 3px; height: 2px; margin: 2px 0; background: #222; }
  .navbar button { height: 18px; }
  .navbar hr { width: 15px; height: 1px; margin: 1px 0; border: 0; background: #6f7377; }
  .knob {
    align-self: flex-end;
    width: 3px;
    height: 3px;
    margin: 1px;
    border: 1px solid #444b54;
    border-radius: 50%;
  }
  .knob + button { margin-top: 4px; }
  .knob.last { margin-top: auto; }

  /* command line */
  .console {
    display: flex;
    margin: 0 2px;
    border-top: 3px solid #3b4453;
    border-bottom: 2px solid #3b4453;
  }
  .grips {
    width: 15px;
    display: flex;
    flex-direction: column;
    align-items: center;
    gap: 2px;
    background: #2d3440;
  }
  .output {
    flex: 1;
    background: #c8c8c8;
    color: #1c1f24;
    font-family: 'Liberation Mono', 'Noto Sans CJK KR', monospace;
  }
  .history { padding: 3px 2px; line-height: 9px; }
  .entry {
    height: 12px;
    display: flex;
    align-items: center;
    padding-left: 2px;
    border-top: 1px solid #555a60;
    background: #fff;
  }
  .entry .arrow { width: 4px; background: #333; }
  .entry input {
    flex: 1;
    height: 12px;
    margin-left: 5px;
    font-style: italic;
  }
  .entry input::placeholder { color: #777; opacity: 1; }

  /* status bar */
  .statusbar {
    height: 21px;
    display: flex;
    align-items: center;
    justify-content: space-between;
    padding: 0 2px 0 10px;
  }
  .statusbar .menu { margin-right: 5px; }
  .toggles { display: flex; gap: 2px; }
  .set {
    height: 14px;
    display: flex;
    align-items: center;
    background: #303743;
  }
  .set button { width: 14px; height: 14px; }
  .set .arrow { margin: 0 3px; }
  .set .word { width: 17px; color: #f2f3f5; font-weight: 700; }
  .set .ratio { width: 14px; }
  .set .ratio + .arrow { margin: 0 2px; }
  .set .on { background: #4d86c4; }
  .set .on + .on { margin-left: 1px; }
</style>
